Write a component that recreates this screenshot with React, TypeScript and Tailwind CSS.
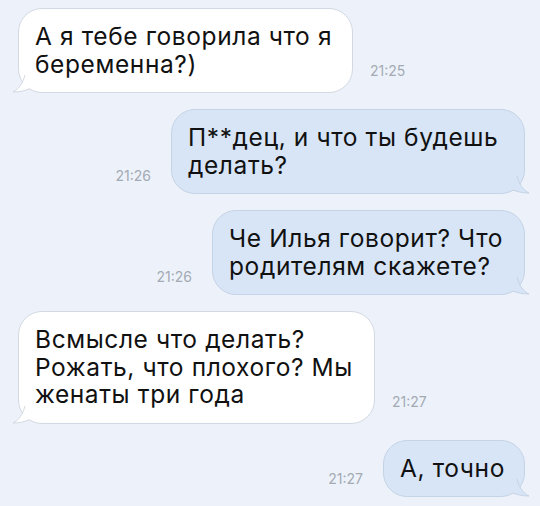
import React from 'react'

interface Message {
    text: string[]
    time: string
    mine: boolean
    width: number
}

const messages: Message[] = [
    { text: ['А я тебе говорила что я', 'беременна?)'], time: '21:25', mine: false, width: 335 },
    { text: ['П**дец, и что ты будешь', 'делать?'], time: '21:26', mine: true, width: 354 },
    { text: ['Че Илья говорит? Что', 'родителям скажете?'], time: '21:26', mine: true, width: 313 },
    { text: ['Всмысле что делать?', 'Рожать, что плохого? Мы', 'женаты три года'], time: '21:27', mine: false, width: 357 },
    { text: ['А, точно'], time: '21:27', mine: true, width: 142 },
]

function Tail({ mine }: { mine: boolean }) {
    // little hook at the bottom corner of a bubble
    if (mine) {
        return (
            <svg className="absolute -right-[9px] bottom-[-1px]" width="22" height="18" viewBox="0 0 22 18">
                <path d="M0 0 L6 0 C8 8 12 14 18 17 C12 17 7 16 2 14 Z" fill="#d7e5f7" />
                <path d="M6 0 C8 8 12 14 18 17 C12 17 7 16 2 14" fill="none" stroke="#c5d3e6" strokeWidth="1" />
            </svg>
        )
    }
    return (
        <svg className="absolute -left-[10px] bottom-[-1px]" width="22" height="18" viewBox="0 0 22 18">
            <path d="M22 0 L16 0 C14 8 10 14 4 17 C10 17 15 16 20 14 Z" fill="#ffffff" />
            <path d="M16 0 C14 8 10 14 4 17 C10 17 15 16 20 14" fill="none" stroke="#d3d9e2" strokeWidth="1" />
        </svg>
    )
}

export default function App() {
    return (
        <div
            className="w-[540px] h-[506px] overflow-hidden bg-[#edf2fa] pt-[8px] pl-[18px] pr-[15px] flex flex-col gap-[16px]"
            style={{ fontFamily: 'Inter, "Liberation Sans", Arial, sans-serif' }}
        >
            {messages.map((msg, i) => (
                <div key={i} className={`flex items-end ${msg.mine ? 'justify-end' : 'justify-start'}`}>
                    {msg.mine && (
                        <span className="mr-[20px] mb-[8px] text-[14px] text-[#a3aab4]">{msg.time}</span>
                    )}
                    <div
                        className={`relative rounded-[24px] px-[16px] py-[14px] text-[24.5px] tracking-[0.6px] leading-[27.5px] text-[#111] border ${msg.mine ? 'bg-[#d7e5f7] border-[#c5d3e6]' : 'bg-white border-[#d3d9e2]'}`}
                        style={{ width: msg.width }}
                    >
                        {msg.text.map((line, j) => (
                            <div key={j} className="whitespace-nowrap">{line}</div>
                        ))}
                        <Tail mine={msg.mine} />
                    </div>
                    {!msg.mine && (
                        <span className="ml-[17px] mb-[12px] text-[14px] text-[#a3aab4]">{msg.time}</span>
                    )}
                </div>
            ))}
        </div>
    )
}
